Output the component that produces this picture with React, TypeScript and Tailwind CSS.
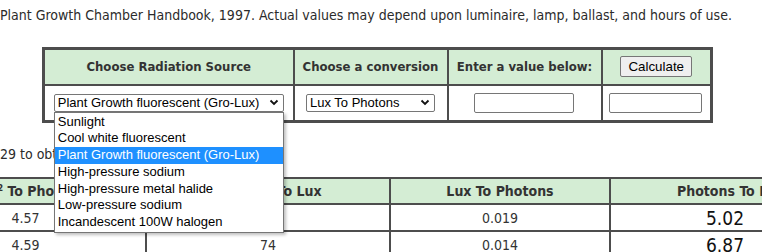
import type { ReactNode } from 'react';

const SOURCES = [
  'Sunlight',
  'Cool white fluorescent',
  'Plant Growth fluorescent (Gro-Lux)',
  'High-pressure sodium',
  'High-pressure metal halide',
  'Low-pressure sodium',
  'Incandescent 100W halogen',
];

const ROWS = [
  { w: '4.57', lux: '54', photons: '0.019', back: '5.02' },
  { w: '4.59', lux: '74', photons: '0.014', back: '6.87' },
];

const tahoma = "font-['DejaVu_Sans_Condensed','DejaVu_Sans',sans-serif]";
const arial = "font-['Liberation_Sans',Arial,sans-serif]";

function Chevron() {
  return (
    <svg width="10" height="7" viewBox="0 0 10 7" className="shrink-0">
      <polyline points="1.5,1.5 5,5 8.5,1.5" fill="none" stroke="#111" strokeWidth="1.8" />
    </svg>
  );
}

function FakeSelect({ value, width, children }: { value: string; width: string; children?: ReactNode }) {
  return (
    <div className={`relative mx-auto ${width}`}>
      <div
        className={`flex h-[18px] items-center justify-between rounded-[2px] border border-[#767676] bg-white pr-[4px] pl-[3px] text-[13px] leading-none text-black ${arial}`}
      >
        <span className="whitespace-nowrap">{value}</span>
        <Chevron />
      </div>
      {children}
    </div>
  );
}

function Th({ children, className = '' }: { children?: ReactNode; className?: string }) {
  return (
    <th
      className={`border-2 border-[#4d4d4d] bg-[#d4edd4] p-0 font-bold whitespace-nowrap text-[#333] ${tahoma} ${className}`}
    >
      {children}
    </th>
  );
}

export default function App() {
  return (
    <div className="h-[252px] w-[762px] overflow-hidden bg-white">
      <p className={`pt-[7px] text-[14px] leading-[16px] whitespace-nowrap text-[#2b2b2b] ${tahoma}`}>
        Plant Growth Chamber Handbook, 1997. Actual values may depend upon luminaire, lamp, ballast, and hours of use.
      </p>

      {/* converter form */}
      <table className="mt-[24px] ml-[42px] w-[668px] table-fixed border-collapse border-[3px] border-[#4d4d4d]">
        <colgroup>
          <col className="w-[250px]" />
          <col className="w-[154px]" />
          <col className="w-[154px]" />
          <col className="w-[110px]" />
        </colgroup>
        <thead>
          <tr className="h-[36px] text-[13px]">
            <Th>Choose Radiation Source</Th>
            <Th>Choose a conversion</Th>
            <Th>Enter a value below:</Th>
            <Th>
              <button
                type="button"
                className={`mx-auto block h-[21px] w-[72px] rounded-[2px] border border-[#767676] bg-[#efefef] text-[13.33px] font-normal text-black ${arial}`}
              >
                Calculate
              </button>
            </Th>
          </tr>
        </thead>
        <tbody>
          <tr className="h-[37px]">
            <td className="border-2 border-[#4d4d4d] p-0">
              <FakeSelect value="Plant Growth fluorescent (Gro-Lux)" width="w-[230px]">
                <ul
                  className={`absolute top-full left-0 z-10 w-full border border-[#767676] bg-white py-[1px] text-[13px] leading-[16.7px] text-black shadow-[2px_2px_3px_rgba(0,0,0,0.25)] ${arial}`}
                >
                  {SOURCES.map((s, i) => (
                    <li
                      key={s}
                      className={`px-[3px] whitespace-nowrap ${i === 2 ? 'bg-[#1e90ff] text-white' : ''}`}
                    >
                      {s}
                    </li>
                  ))}
                </ul>
              </FakeSelect>
            </td>
            <td className="border-2 border-[#4d4d4d] p-0">
              <FakeSelect value="Lux To Photons" width="w-[129px]" />
            </td>
            <td className="border-2 border-[#4d4d4d] p-0">
              <div className="mx-auto h-[20px] w-[100px] -translate-x-[1px] rounded-[2px] border border-[#767676] bg-white" />
            </td>
            <td className="border-2 border-[#4d4d4d] p-0">
              <div className="mx-auto h-[20px] w-[93px] -translate-x-[1px] rounded-[2px] border border-[#767676] bg-white" />
            </td>
          </tr>
        </tbody>
      </table>

      <p className={`mt-[23px] text-[14px] leading-[16px] whitespace-nowrap text-[#2b2b2b] ${tahoma}`}>
        29 to obtain lux.
      </p>

      {/* conversion factors table, scrolled sideways */}
      <div className="mt-[15px] overflow-hidden">
        <table className="ml-[-96px] w-[935px] table-fixed border-collapse">
          <colgroup>
            <col className="w-[241px]" />
            <col className="w-[244px]" />
            <col className="w-[220px]" />
            <col className="w-[230px]" />
          </colgroup>
          <thead>
            <tr className="h-[26px] text-[14px]">
              <Th>
                W/m<sup className="text-[9px]">2</sup> To Photons
              </Th>
              <Th>Photons To Lux</Th>
              <Th>Lux To Photons</Th>
              <Th className="pl-[66px] text-left">Photons To Lumens</Th>
            </tr>
          </thead>
          <tbody>
            {ROWS.map((r) => (
              <tr key={r.w} className={`h-[27px] text-center text-[14px] text-[#333] ${tahoma}`}>
                <td className="border-2 border-[#4d4d4d] p-0 leading-[20px]">{r.w}</td>
                <td className="border-2 border-[#4d4d4d] p-0 leading-[20px]">{r.lux}</td>
                <td className="border-2 border-[#4d4d4d] p-0 leading-[20px]">{r.photons}</td>
                <td className="border-2 border-[#4d4d4d] p-0 text-[19px] leading-[20px] text-[#111]">{r.back}</td>
              </tr>
            ))}
          </tbody>
        </table>
      </div>
    </div>
  );
}
